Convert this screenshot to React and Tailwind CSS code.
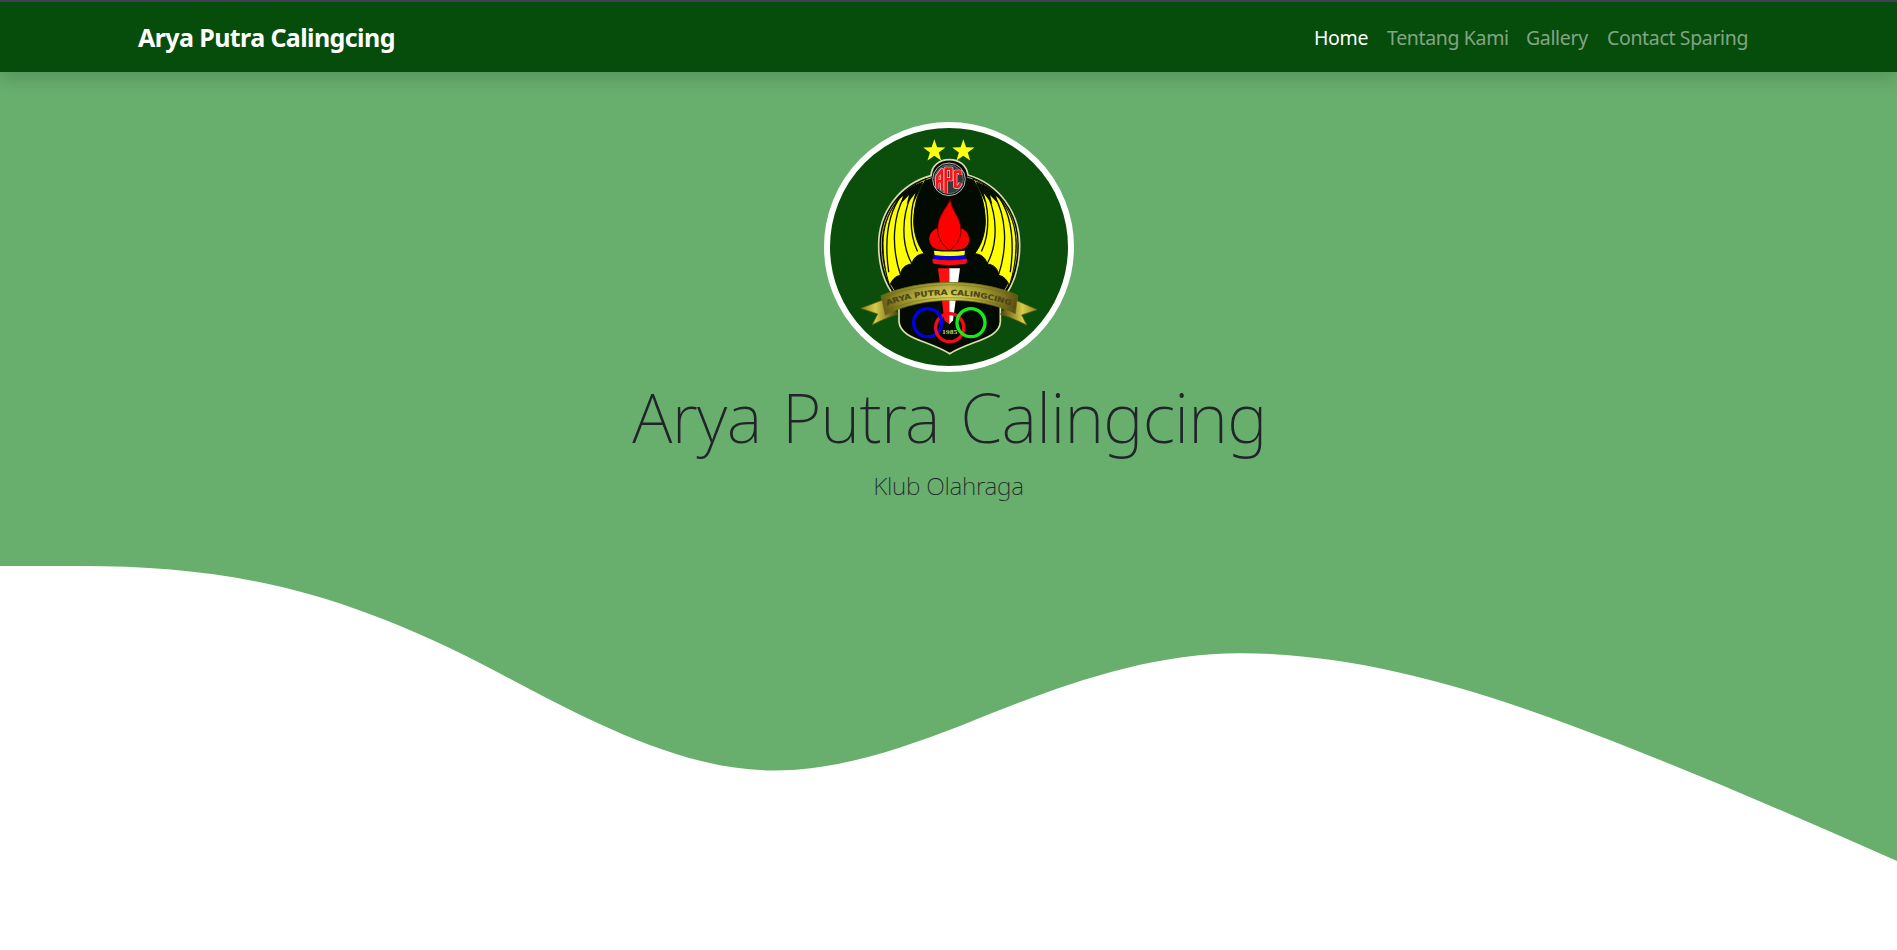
const star = (cx, cy, r) =>
  Array.from({ length: 10 }, (_, i) => {
    const a = (Math.PI * i) / 5 - Math.PI / 2;
    const k = i % 2 ? r * 0.4 : r;
    return `${(cx + k * Math.cos(a)).toFixed(1)},${(cy + k * Math.sin(a)).toFixed(1)}`;
  }).join(" ");

function Wing() {
  return (
    <g>
      <path
        d="M333 192C262 222 205 290 204 385C204 430 211 472 224 512C230 495 242 483 256 481C258 460 272 448 291 447C294 430 307 417 328 416C308 390 297 358 296 320C297 272 310 230 333 192Z"
        fill="#ffff00"
        stroke="#040d04"
        strokeWidth="3"
      />
      <path d="M326 199C290 212 262 232 240 262L264 243L256 268L282 240L275 268L301 235L297 262L314 225Z" fill="#040d04" />
      <g fill="none" stroke="#040d04" strokeLinecap="round">
        <path d="M260 240C222 290 207 370 221 470" strokeWidth="4" />
        <path d="M268 244C236 300 226 390 257 481" strokeWidth="4" />
        <path d="M288 242C262 300 256 385 291 447" strokeWidth="4" />
        <path d="M308 226C285 270 280 350 307 408" strokeWidth="4" />
        <path d="M322 208C298 255 292 310 303 358" strokeWidth="2.5" />
      </g>
    </g>
  );
}

function Crest() {
  return (
    <svg viewBox="27 21 750 750" className="size-[250px]" role="img">
      <defs>
        <linearGradient id="gold" x1="0" x2="1" y1="0" y2="0">
          <stop offset="0" stopColor="#6b5e14" />
          <stop offset=".12" stopColor="#938b25" />
          <stop offset=".35" stopColor="#c5bf45" />
          <stop offset=".5" stopColor="#dcd657" />
          <stop offset=".68" stopColor="#bdb63d" />
          <stop offset=".9" stopColor="#7f7520" />
          <stop offset="1" stopColor="#5a4d10" />
        </linearGradient>
        <linearGradient id="shade" x1="0" x2="0" y1="0" y2="1">
          <stop offset="0" stopColor="#3a3408" stopOpacity=".3" />
          <stop offset=".45" stopColor="#3a3408" stopOpacity="0" />
          <stop offset="1" stopColor="#3a3408" stopOpacity=".3" />
        </linearGradient>
        <linearGradient id="tail" x1="0" x2="1" y1="0" y2="0">
          <stop offset="0" stopColor="#8e861f" />
          <stop offset=".4" stopColor="#d7cc49" />
          <stop offset="1" stopColor="#4e430e" />
        </linearGradient>
        <linearGradient id="tailRight" x1="1" x2="0" y1="0" y2="0">
          <stop offset="0" stopColor="#8e861f" />
          <stop offset=".4" stopColor="#d7cc49" />
          <stop offset="1" stopColor="#4e430e" />
        </linearGradient>
        <path id="motto" d="M216 572C325 529 475 529 594 575" />
      </defs>
      <circle cx="402" cy="396" r="366" fill="#0b4e0c" stroke="#fff" strokeWidth="18" />
      <polygon points={star(358, 108, 35)} fill="#ffff10" />
      <polygon points={star(445, 108, 35)} fill="#ffff10" />

      <path
        d="M348 182C350 151 373 134 403 134C433 134 455 151 459 180C550 207 614 290 614 390C614 462 592 520 556 560L556 620C554 672 470 676 404 716C338 676 256 672 252 620L252 560C214 520 191 462 191 390C191 290 255 207 348 182Z"
        fill="#020a02"
        stroke="#dddfaa"
        strokeWidth="5"
      />
      <path
        d="M350 188C260 215 199 293 199 390C199 452 217 504 248 540M456 186C545 213 606 293 606 390C606 452 588 504 558 540"
        fill="none"
        stroke="#c9cd72"
        strokeWidth="2.5"
      />
      <Wing />
      <g transform="translate(807 0) scale(-1 1)">
        <Wing />
      </g>

      <circle cx="402" cy="193" r="49" fill="#151b18" stroke="#b5b8b5" strokeWidth="3" />
      <circle cx="402" cy="193" r="43" fill="#343b38" stroke="#747a77" strokeWidth="2.5" />
      <g fill="none" strokeLinejoin="round">
        <g stroke="#d9dbd8" strokeWidth="12">
          <path d="M367 220V184L381 165V226M367 199H381" />
          <path d="M392 234V161H409V193H394" />
          <path d="M436 180V170H421V215H431L437 204" />
        </g>
        <g stroke="#fb1218" strokeWidth="8">
          <path d="M367 220V184L381 165V226M367 199H381" />
          <path d="M392 234V161H409V193H394" />
          <path d="M436 180V170H421V215H431L437 204" />
        </g>
      </g>

      <path d="M369 338C340 349 336 377 352 395C362 404 381 405 403 406C426 405 448 405 458 391C468 372 461 348 437 338Z" fill="#ff0000" />
      <path
        d="M406 253C410 290 438 307 438 345C438 371 423 392 404 407C383 391 368 370 368 343C368 300 393 283 406 253Z"
        fill="#ff0000"
        stroke="#650000"
        strokeWidth="3"
      />
      <path d="M357 407Q404 412 450 407L448 422Q404 426 359 422Z" fill="#ffff16" />
      <path d="M355 420Q404 427 453 420V433Q404 439 355 433Z" fill="#0000ef" />
      <path d="M353 431Q404 440 455 431Q459 444 448 447Q404 454 360 447Q350 444 353 431Z" fill="#ff0c0c" />
      <path d="M369 460H403V628L388 616Z" fill="#ff1010" />
      <path d="M403 460H435L414 616L403 628Z" fill="#fff" />

      <path d="M137 580L211 552L249 598Q215 607 171 630L188 597Z" fill="url(#tail)" stroke="#5f590f" strokeWidth="2" />
      <path d="M667 584L596 553L556 598Q590 607 636 631L620 600Z" fill="url(#tailRight)" stroke="#5f590f" strokeWidth="2" />
      <path
        d="M198 542C320 490 490 488 608 541L601 596C490 541 320 543 211 600Z"
        fill="url(#gold)"
        stroke="#777018"
        strokeWidth="2"
      />
      <path d="M198 542C320 490 490 488 608 541L601 596C490 541 320 543 211 600Z" fill="url(#shade)" />
      <path d="M204 549C322 497 488 496 603 548M210 590C320 535 488 534 599 587" fill="none" stroke="#6d6616" strokeWidth="1.5" />
      <text fill="#4d4618" stroke="#4d4618" strokeWidth=".5" fontFamily="DejaVu Sans, sans-serif" fontWeight="700" fontSize="22">
        <textPath href="#motto" textLength="378" lengthAdjust="spacingAndGlyphs">
          ARYA PUTRA CALINGCING
        </textPath>
      </text>

      <g fill="none" strokeWidth="10">
        <circle cx="338" cy="623" r="42" stroke="#0000e6" />
        <circle cx="404" cy="638" r="42" stroke="#f40b15" />
        <circle cx="468" cy="623" r="42" stroke="#18eb18" />
        <path d="M373 598A42 42 0 0 1 380 623" stroke="#0000e6" />
      </g>
      <text x="381" y="658" textLength="46" lengthAdjust="spacingAndGlyphs" fill="#d5d36b" fontFamily="DejaVu Serif, serif" fontWeight="700" fontSize="16">
        1985
      </text>
    </svg>
  );
}

const links = [
  { label: "Home", style: "w-[73px] text-white" },
  { label: "Tentang Kami", style: "w-[139px] text-white/50" },
  { label: "Gallery", style: "w-[81px] text-white/50" },
  { label: "Contact Sparing", style: "w-[142px] text-white/50" },
];

export default function App() {
  return (
    <div className="h-[950px] w-full overflow-hidden bg-white font-['Noto_Sans','Open_Sans',sans-serif] text-[#212529]">
      <nav className="relative z-10 flex h-[72px] items-center justify-between border-t-2 border-[#414259] bg-[#064c0b] pr-[148px] pl-[138px] shadow-[0_8px_16px_rgba(0,0,0,0.15)]">
        <a className="pb-px text-[25px] leading-9 font-bold tracking-[-0.6px] whitespace-nowrap text-white">Arya Putra Calingcing</a>
        <ul className="flex pt-px text-[19.5px] leading-7 tracking-[-0.35px] whitespace-nowrap">
          {links.map((l) => (
            <li key={l.label} className={l.style}>{l.label}</li>
          ))}
        </ul>
      </nav>
      <header className="flex h-[494px] flex-col items-center bg-[#68af6e] pt-[50px]">
        <Crest />
        <h1 className="mt-[2px] pl-[2px] text-[68px] leading-[86px] font-extralight tracking-[-0.7px] [word-spacing:3.5px] whitespace-nowrap">
          Arya Putra Calingcing
        </h1>
        <p className="mt-[8px] text-[24.5px] leading-[36px] font-extralight tracking-[-0.3px] whitespace-nowrap">Klub Olahraga</p>
      </header>
      <svg viewBox="0 566 1897 384" className="block h-[384px] w-full bg-white" preserveAspectRatio="none">
        <path
          fill="#68af6e"
          d="M0 566H80C230 566 342 589.8 500 673.5C591 721.7 683 770.5 774 770.5C836 770.5 898 749.9 960 726C1050 689.5 1142 653.2 1240 653.2C1373 653.2 1507 698.7 1640 752C1726 786 1811 823 1897 861V566Z"
        />
      </svg>
    </div>
  );
}
